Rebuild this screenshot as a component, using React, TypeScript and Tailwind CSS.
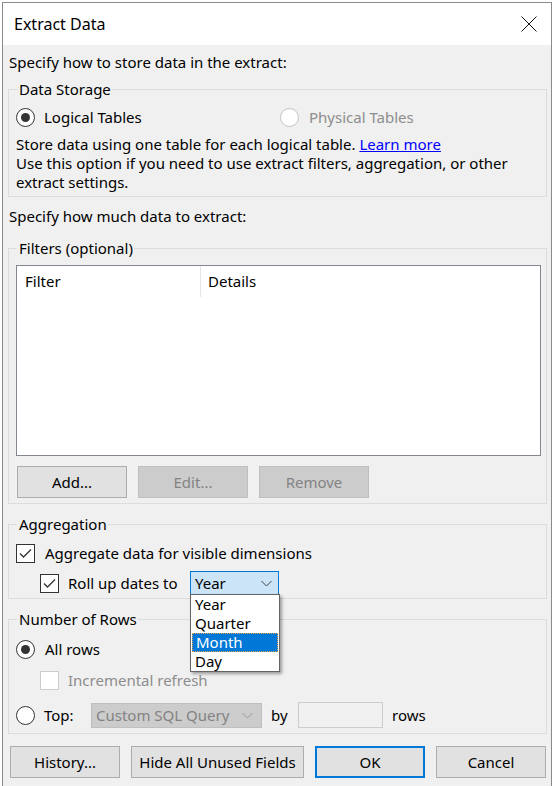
import React from "react";

function Radio({ checked, disabled }: { checked?: boolean; disabled?: boolean }) {
  return (
    <div
      className={`w-[19px] h-[19px] rounded-full border bg-white flex items-center justify-center shrink-0 ${
        disabled ? "border-[#c4c4c4]" : "border-[#333333]"
      }`}
    >
      {checked && <div className="w-[9px] h-[9px] rounded-full bg-[#333333]" />}
    </div>
  );
}

function Checkbox({ checked, disabled }: { checked?: boolean; disabled?: boolean }) {
  return (
    <div
      className={`w-[19px] h-[19px] border bg-white flex items-center justify-center shrink-0 ${
        disabled ? "border-[#cccccc]" : "border-[#333333]"
      }`}
    >
      {checked && (
        <svg width="15" height="15" viewBox="0 0 15 15">
          <path d="M2 7.5 L5.5 11 L13 3.5" fill="none" stroke="#333333" strokeWidth="1.3" />
        </svg>
      )}
    </div>
  );
}

function Chevron({ color = "#444444" }: { color?: string }) {
  return (
    <svg width="11" height="7" viewBox="0 0 11 7">
      <path d="M0.5 1 L5.5 6 L10.5 1" fill="none" stroke={color} strokeWidth="1" />
    </svg>
  );
}

function Btn({
  children,
  disabled,
  primary,
  className = "",
}: {
  children: React.ReactNode;
  disabled?: boolean;
  primary?: boolean;
  className?: string;
}) {
  const look = disabled
    ? "bg-[#cccccc] border border-[#bfbfbf] text-[#838383]"
    : primary
    ? "bg-[#e1e1e1] border-2 border-[#0078d7] text-black"
    : "bg-[#e1e1e1] border border-[#adadad] text-black";
  return (
    <div className={`h-[32px] flex items-center justify-center shrink-0 ${look} ${className}`}>
      {children}
    </div>
  );
}

function Group({
  label,
  className = "",
  children,
}: {
  label: string;
  className?: string;
  children: React.ReactNode;
}) {
  return (
    <fieldset className={`ml-[5px] w-[539px] border border-[#dcdcdc] ${className}`}>
      <legend className="ml-[8px] pl-[2px] pr-[1px] leading-[19px]">{label}</legend>
      {children}
    </fieldset>
  );
}

export default function App() {
  return (
    <div className="w-[554px] h-[786px] overflow-hidden bg-white font-['Noto_Sans',sans-serif] text-[15px] text-black">
      <div className="mt-[2px] ml-[2px] w-[550px] h-[784px] border-l border-t border-r border-[#8a8a8a] bg-[#f0f0f0]">
        {/* title bar */}
        <div className="h-[42px] bg-white flex items-center justify-between pl-[11px] pr-[14px]">
          <span className="text-[16px]">Extract Data</span>
          <svg width="16" height="16" viewBox="0 0 16 16">
            <path d="M0.5 0.5 L15.5 15.5 M15.5 0.5 L0.5 15.5" stroke="#111111" strokeWidth="1" />
          </svg>
        </div>

        <p className="pt-[8px] pl-[6px] leading-[19px]">Specify how to store data in the extract:</p>

        <Group label="Data Storage" className="mt-[8px]">
          <div className="pt-[8px] pb-[4px] pl-[7px]">
            <div className="h-[20px] flex items-center">
              <Radio checked />
              <span className="ml-[9px] w-[236px]">Logical Tables</span>
              <Radio disabled />
              <span className="ml-[10px] text-[#8d8d8d]">Physical Tables</span>
            </div>
            <div className="mt-[8px] leading-[19px]">
              <div>
                Store data using one table for each logical table.{" "}
                <span className="text-[#0000ff] underline">Learn more</span>
              </div>
              <div>Use this option if you need to use extract filters, aggregation, or other</div>
              <div>extract settings.</div>
            </div>
          </div>
        </Group>

        <p className="mt-[10px] pl-[6px] leading-[19px]">Specify how much data to extract:</p>

        <Group label="Filters (optional)" className="mt-[13px]">
          <div className="pt-[7px] pb-[5px] pl-[7px]">
            <div className="w-[525px] h-[191px] border border-[#828790] bg-white">
              <div className="flex h-[31px]">
                <div className="w-[184px] border-r border-[#e5e5e5] pl-[8px] flex items-center">Filter</div>
                <div className="pl-[7px] flex items-center">Details</div>
              </div>
            </div>
            <div className="mt-[10px] flex gap-[11px] pl-[1px]">
              <Btn className="w-[110px]">Add...</Btn>
              <Btn disabled className="w-[110px]">
                Edit...
              </Btn>
              <Btn disabled className="w-[110px]">
                Remove
              </Btn>
            </div>
          </div>
        </Group>

        <Group label="Aggregation" className="mt-[11px]">
          <div className="pt-[9px] pb-[3px] pl-[7px]">
            <div className="h-[20px] flex items-center">
              <Checkbox checked />
              <span className="ml-[10px]">Aggregate data for visible dimensions</span>
            </div>
            <div className="mt-[8px] h-[24px] flex items-center pl-[24px]">
              <Checkbox checked />
              <span className="ml-[9px] w-[122px]">Roll up dates to</span>
              <div className="relative">
                <div className="w-[89px] h-[24px] bg-[#cce4f7] border border-[#0078d7] flex items-center justify-between pl-[4px] pr-[6px]">
                  <span>Year</span>
                  <Chevron />
                </div>
                <div className="absolute left-0 top-[23px] z-10 w-[90px] border border-[#646464] bg-white shadow-[2px_2px_3px_rgba(0,0,0,0.35)] leading-[19px]">
                  <div className="px-[4px]">Year</div>
                  <div className="px-[4px]">Quarter</div>
                  <div className="mx-[1px] px-[3px] bg-[#0078d7] text-white border border-dotted border-[#e9a04a] leading-[17px]">
                    Month
                  </div>
                  <div className="px-[4px]">Day</div>
                </div>
              </div>
            </div>
          </div>
        </Group>

        <Group label="Number of Rows" className="mt-[11px]">
          <div className="pt-[10px] pb-[5px] pl-[7px]">
            <div className="h-[20px] flex items-center">
              <Radio checked />
              <span className="ml-[10px]">All rows</span>
            </div>
            <div className="mt-[11px] h-[20px] flex items-center pl-[24px]">
              <Checkbox disabled />
              <span className="ml-[9px] text-[#8d8d8d]">Incremental refresh</span>
            </div>
            <div className="mt-[12px] h-[26px] flex items-center">
              <Radio />
              <span className="ml-[9px] w-[47px]">Top:</span>
              <div className="w-[171px] h-[25px] bg-[#cccccc] border border-[#bfbfbf] flex items-center justify-between pl-[4px] pr-[8px] text-[#838383]">
                <span>Custom SQL Query</span>
                <Chevron color="#9a9a9a" />
              </div>
              <span className="ml-[9px] w-[27px]">by</span>
              <div className="w-[85px] h-[26px] border border-[#cccccc] bg-[#f0f0f0]" />
              <span className="ml-[9px]">rows</span>
            </div>
          </div>
        </Group>

        <div className="mt-[12px] pl-[7px] flex gap-[11px]">
          <Btn className="w-[110px]">History...</Btn>
          <Btn className="w-[173px]">Hide All Unused Fields</Btn>
          <Btn primary className="w-[110px]">
            OK
          </Btn>
          <Btn className="w-[110px]">Cancel</Btn>
        </div>
      </div>
    </div>
  );
}
